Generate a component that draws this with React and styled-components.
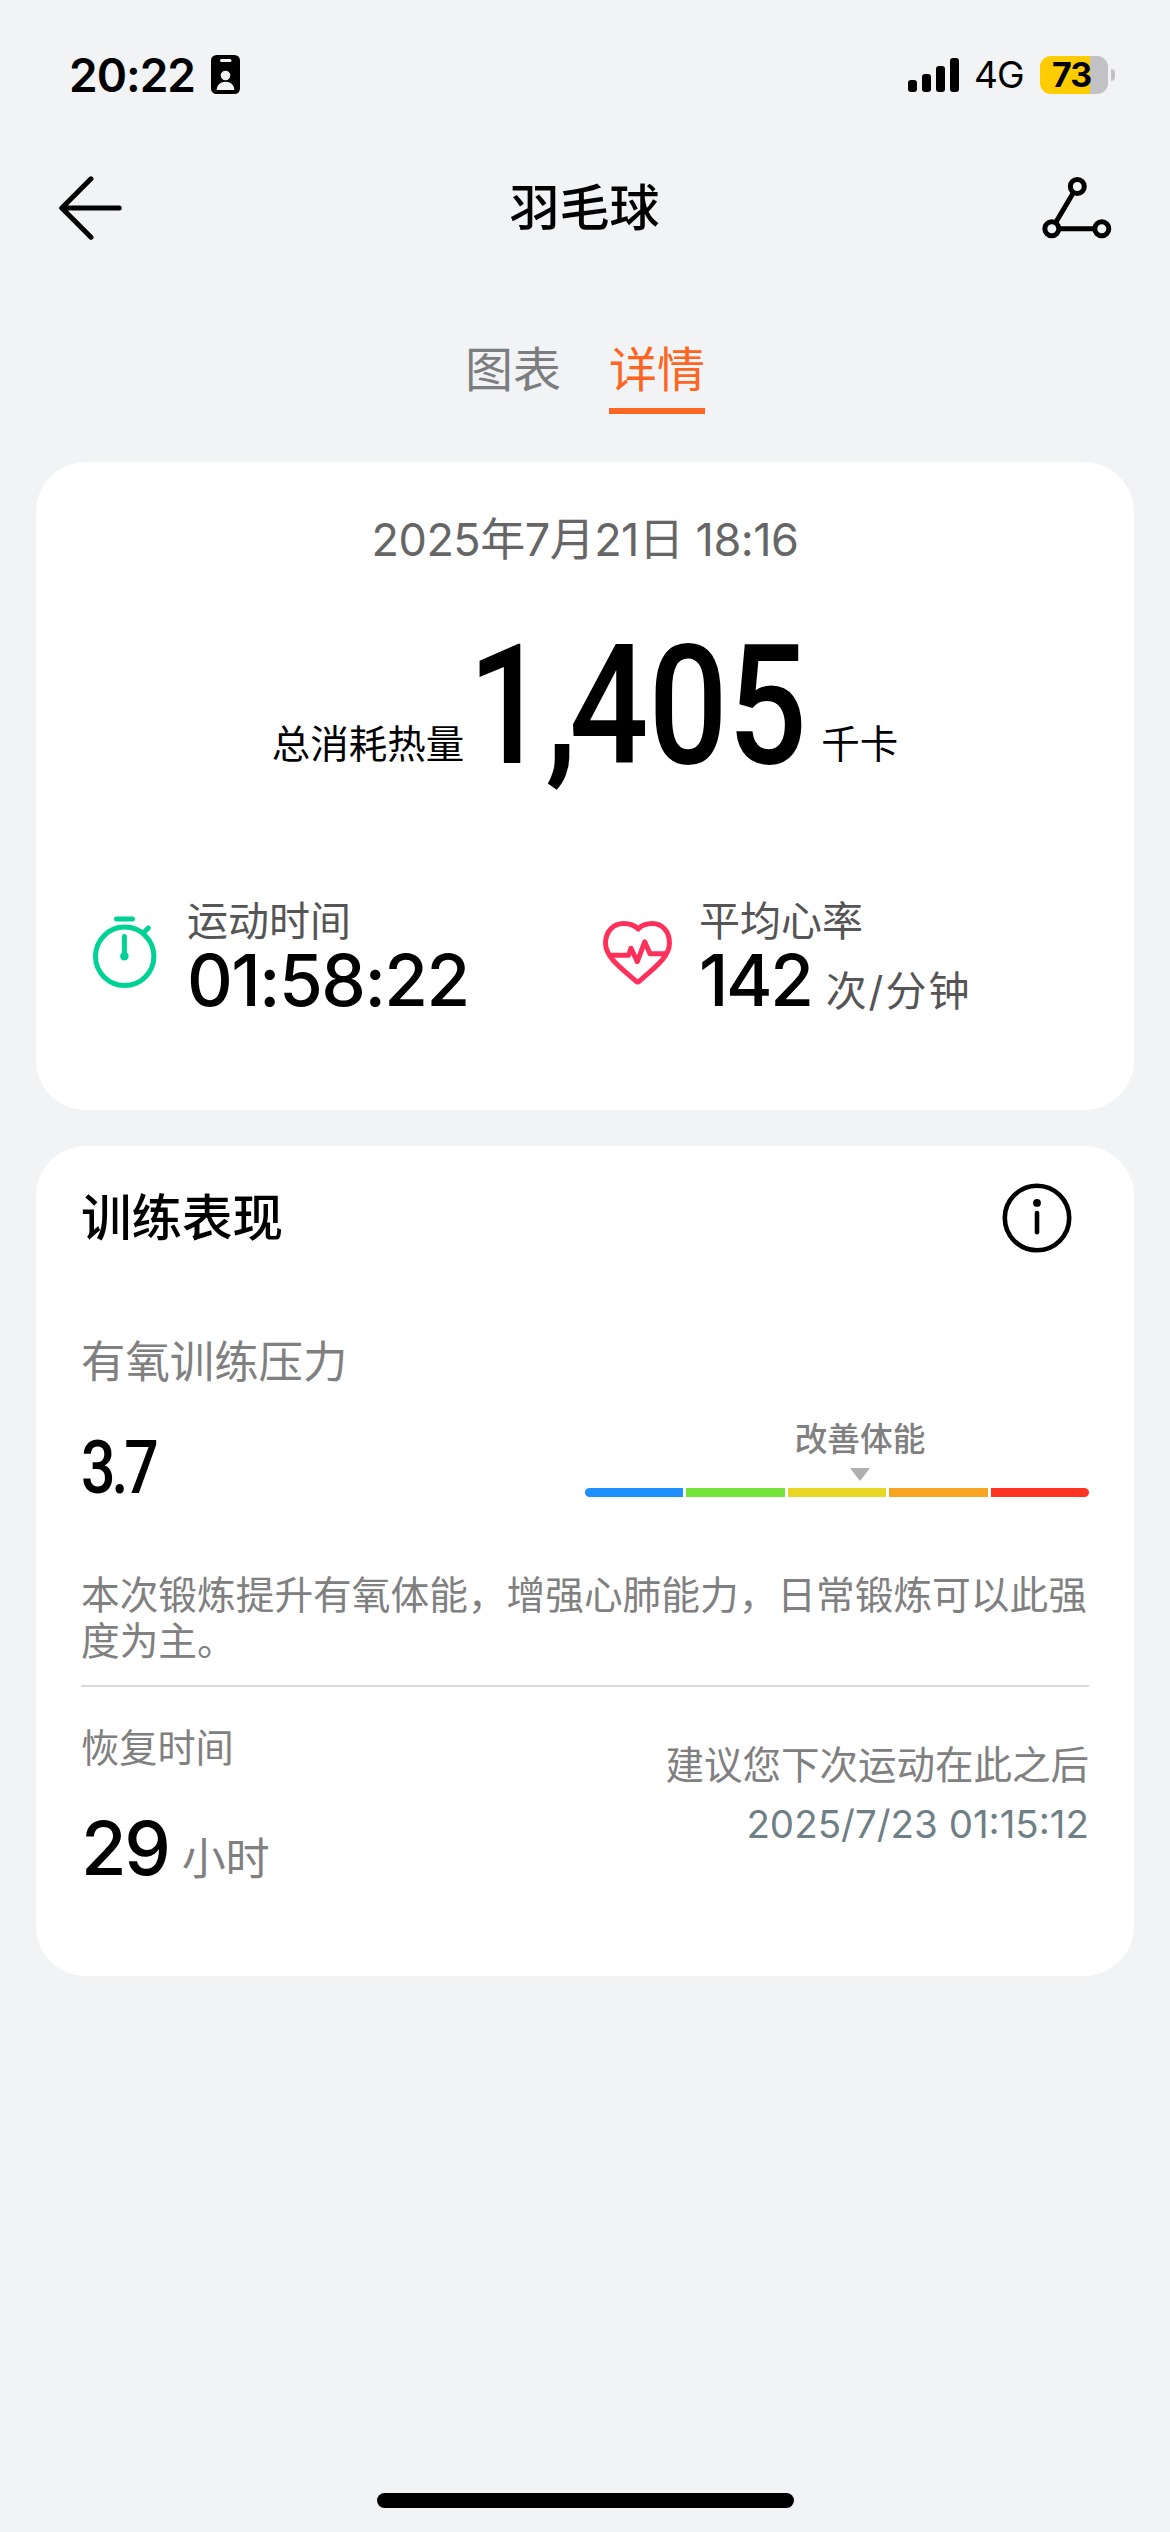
import React, { useState } from "react";
import styled, { createGlobalStyle } from "styled-components";

const zones = ["#1f8fff", "#76e23c", "#e8d624", "#f8a524", "#ff3422"];
const bars = [12, 18, 26, 34];

export default function App() {
  const [tab, setTab] = useState(1);

  return (
    <Screen>
      <GlobalStyle />
      <StatusBar>
        <Clock>20:22</Clock>
        <BadgeIcon />
        <Signal>
          {bars.map((h) => (
            <SignalBar key={h} $h={h} />
          ))}
        </Signal>
        <Network>4G</Network>
        <Battery>
          <BatteryText>73</BatteryText>
        </Battery>
        <BatteryTip />
      </StatusBar>

      <Header>
        <BackIcon />
        <Title>羽毛球</Title>
        <ShareIcon />
      </Header>

      <Tabs>
        {["图表", "详情"].map((name, i) => (
          <Tab key={name} $active={tab === i} onClick={() => setTab(i)}>
            {name}
          </Tab>
        ))}
      </Tabs>

      <Summary>
        <DateText>2025年7月21日 18:16</DateText>
        <Calories>
          <CaloriesLabel>总消耗热量</CaloriesLabel>
          <CaloriesValue>
            <Narrow $scale={0.835}>
              1<Comma>,</Comma>405
            </Narrow>
          </CaloriesValue>
          <CaloriesLabel>千卡</CaloriesLabel>
        </Calories>
        <Stats>
          <Stat>
            <TimerIcon />
            <div>
              <StatLabel>运动时间</StatLabel>
              <StatValue $spacing={-1.6}>01:58:22</StatValue>
            </div>
          </Stat>
          <Stat>
            <HeartIcon />
            <div>
              <StatLabel>平均心率</StatLabel>
              <StatValue $spacing={-2.4}>
                142<StatUnit>次/分钟</StatUnit>
              </StatValue>
            </div>
          </Stat>
        </Stats>
      </Summary>

      <Training>
        <TrainingHead>
          <SectionTitle>训练表现</SectionTitle>
          <InfoIcon />
        </TrainingHead>
        <StressLabel>有氧训练压力</StressLabel>
        <StressRow>
          <StressValue>
            <Narrow $scale={0.81}>3.7</Narrow>
          </StressValue>
          <Gauge>
            <Pointer>
              <PointerText>改善体能</PointerText>
              <PointerArrow />
            </Pointer>
            <Zones>
              {zones.map((c) => (
                <Zone key={c} $color={c} />
              ))}
            </Zones>
          </Gauge>
        </StressRow>
        <Advice>
          本次锻炼提升有氧体能，增强心肺能力，日常锻炼可以此强度为主。
        </Advice>
        <Recovery>
          <div>
            <RecoveryLabel>恢复时间</RecoveryLabel>
            <RecoveryValue>
              29<RecoveryUnit>小时</RecoveryUnit>
            </RecoveryValue>
          </div>
          <NextWorkout>
            <NextLabel>建议您下次运动在此之后</NextLabel>
            <NextDate>2025/7/23 01:15:12</NextDate>
          </NextWorkout>
        </Recovery>
      </Training>

      <HomeBar />
    </Screen>
  );
}

function BadgeIcon() {
  return (
    <svg width="29" height="39" viewBox="0 0 29 39">
      <rect width="29" height="39" rx="5.5" fill="#000" />
      <rect x="9" y="4" width="11.5" height="3" rx="1.5" fill="#f1f3f5" />
      <circle cx="14.5" cy="20.5" r="4.8" fill="#f1f3f5" />
      <path d="M5.7 35c0-5 3.8-8.2 8.8-8.2s8.8 3.2 8.8 8.2z" fill="#f1f3f5" />
    </svg>
  );
}

function BackIcon() {
  return (
    <svg width="64" height="64" viewBox="0 0 64 64" fill="none" stroke="#000" strokeWidth="5" strokeLinecap="round" strokeLinejoin="round">
      <path d="M33 2.8 3.8 32 33 61.2M3.8 32h57.4" />
    </svg>
  );
}

function ShareIcon() {
  return (
    <svg width="70" height="62" viewBox="0 0 70 62" fill="none" stroke="#000" strokeWidth="5">
      <path d="M31.2 16 14.3 44.5M17 51.8h34" />
      <circle cx="35.3" cy="9.5" r="7" />
      <circle cx="9.8" cy="51.8" r="7" />
      <circle cx="59.8" cy="51.8" r="7" />
    </svg>
  );
}

function TimerIcon() {
  return (
    <svg width="70" height="74" viewBox="0 0 70 74" fill="none" stroke="#00d295" strokeWidth="5" strokeLinecap="round">
      <circle cx="32.7" cy="41.3" r="29.2" />
      <path d="M24.5 3.9h16M32.4 21.5v19M53 16.3l3.4-3.4" />
      <circle cx="32.4" cy="41.3" r="4.2" fill="#00d295" stroke="none" />
    </svg>
  );
}

function HeartIcon() {
  return (
    <svg width="71" height="70" viewBox="0 -6 71 70" fill="none" stroke="#ff315b" strokeWidth="5" strokeLinecap="round" strokeLinejoin="round">
      <path d="M35.2 8C31 3.6 26 2.5 20.5 2.5C10.5 2.5 2.5 10.5 2.5 22C2.5 37 20 48.5 33 60.2Q34.7 61.5 36.4 60.2C49 48.5 66.5 37 66.5 22C66.5 10.5 59 2.5 49.5 2.5C44 2.5 39 3.6 35.2 8Z" />
      <path d="M8.5 34.3H25.5L28 27.2L34.3 40.6L41.7 20.8L47 32.8H62.5" />
    </svg>
  );
}

function InfoIcon() {
  return (
    <svg width="70" height="70" viewBox="0 0 70 70" fill="none" stroke="#000" strokeWidth="4.6" strokeLinecap="round">
      <circle cx="35" cy="35" r="32.2" />
      <path d="M35 30v19.3" />
      <circle cx="35" cy="19.9" r="3.9" fill="#000" stroke="none" />
    </svg>
  );
}

const GlobalStyle = createGlobalStyle`
  body {
    margin: 0;
    background-color: #f1f3f5;
  }
`;

const Screen = styled.div`
  display: flex;
  flex-direction: column;
  box-sizing: border-box;
  width: 1170px;
  height: 2532px;
  padding: 0 36px;
  background-color: #f1f3f5;
  color: #000;
  font-family: Inter, "Noto Sans CJK SC", sans-serif;
  white-space: nowrap;
  svg {
    display: block;
    flex-shrink: 0;
  }
`;

const StatusBar = styled.div`
  display: flex;
  align-items: center;
  height: 149px;
  padding: 0 19px 0 33px;
`;

const Clock = styled.div`
  width: 142px;
  font-size: 46px;
  font-weight: 600;
  letter-spacing: -1px;
  line-height: 60px;
`;

const Signal = styled.div`
  display: flex;
  align-items: flex-end;
  gap: 5px;
  height: 34px;
  margin-left: auto;
`;

const SignalBar = styled.div`
  width: 9px;
  height: ${(p) => p.$h}px;
  border-radius: 3px;
  background-color: #000;
`;

const Network = styled.div`
  width: 66px;
  margin-left: 15px;
  font-size: 37px;
  letter-spacing: -1px;
  line-height: 62px;
`;

const Battery = styled.div`
  width: 68px;
  height: 38px;
  border-radius: 11px;
  background: linear-gradient(to right, #ffcc00 50px, #c2c2c4 50px);
`;

const BatteryText = styled.div`
  padding-left: 12px;
  font-size: 34px;
  font-weight: 700;
  letter-spacing: -1px;
  line-height: 38px;
`;

const BatteryTip = styled.div`
  width: 4px;
  height: 12px;
  margin-left: 3px;
  border-radius: 0 6px 6px 0;
  background-color: #c2c2c4;
`;

const Header = styled.div`
  display: flex;
  align-items: center;
  justify-content: space-between;
  height: 117px;
  padding: 0 22px;
`;

const Title = styled.div`
  padding-left: 5px;
  font-size: 50px;
  font-weight: 500;
  line-height: 70px;
`;

const Tabs = styled.div`
  display: flex;
  justify-content: center;
  gap: 48px;
  padding-top: 68px;
`;

const Tab = styled.div`
  padding-bottom: 2px;
  border-bottom: 6px solid ${(p) => (p.$active ? "#fd6522" : "transparent")};
  color: ${(p) => (p.$active ? "#fd6522" : "#7c7d7e")};
  font-size: 48px;
  line-height: 72px;
  cursor: pointer;
`;

const Card = styled.div`
  box-sizing: border-box;
  border-radius: 50px;
  background-color: #fff;
`;

const Summary = styled(Card)`
  height: 648px;
  margin-top: 48px;
  padding-top: 48px;
`;

const DateText = styled.div`
  color: #666;
  font-size: 45px;
  letter-spacing: -0.5px;
  line-height: 60px;
  text-align: center;
`;

const Calories = styled.div`
  display: flex;
  align-items: flex-end;
  justify-content: center;
  height: 210px;
`;

const CaloriesLabel = styled.div`
  font-size: 38.5px;
  line-height: 50px;
  padding-bottom: 11px;
`;

const CaloriesValue = styled.div`
  width: 335px;
  margin: 0 18px 0 4px;
  font-family: Roboto, sans-serif;
  font-size: 167px;
  font-weight: 500;
  line-height: 148px;
`;

// condensed figures used for the headline numbers
const Narrow = styled.span`
  display: inline-block;
  transform: scaleX(${(p) => p.$scale});
  transform-origin: left;
`;

const Comma = styled.span`
  margin: 0 -9px 0 -2px;
`;

const Stats = styled.div`
  display: flex;
  padding: 116px 0 0 56px;
`;

const Stat = styled.div`
  display: flex;
  width: 511px;
  svg {
    margin: 19px 25px 0 0;
  }
`;

const StatLabel = styled.div`
  color: #555;
  font-size: 41px;
  line-height: 50px;
`;

const StatValue = styled.div`
  font-size: 71px;
  font-weight: 500;
  letter-spacing: ${(p) => p.$spacing}px;
  line-height: 68px;
`;

const StatUnit = styled.span`
  margin-left: 14px;
  color: #555;
  font-size: 41px;
  font-weight: 400;
  letter-spacing: 2px;
`;

const Training = styled(Card)`
  height: 830px;
  margin-top: 36px;
  padding: 36px 45px 0;
`;

const TrainingHead = styled.div`
  display: flex;
  align-items: center;
  justify-content: space-between;
  height: 72px;
  padding-right: 17px;
`;

const SectionTitle = styled.div`
  font-size: 50.5px;
  font-weight: 500;
  line-height: 72px;
`;

const StressLabel = styled.div`
  margin-top: 78px;
  color: #808080;
  font-size: 44.4px;
  line-height: 60px;
`;

const StressRow = styled.div`
  display: flex;
  align-items: flex-end;
  justify-content: space-between;
  height: 105px;
`;

const StressValue = styled.div`
  font-family: Roboto, sans-serif;
  font-size: 75px;
  font-weight: 500;
  letter-spacing: -5px;
  line-height: 60px;
`;

const Gauge = styled.div`
  width: 504px;
`;

const Pointer = styled.div`
  display: flex;
  flex-direction: column;
  align-items: center;
  width: 550px;
`;

const PointerText = styled.div`
  color: #808080;
  font-size: 32.7px;
  font-weight: 500;
  line-height: 40px;
`;

const PointerArrow = styled.div`
  margin: 9px 0 7px;
  border: 10.5px solid transparent;
  border-top: 13px solid #b0b0b0;
  border-bottom: 0;
`;

const Zones = styled.div`
  display: flex;
  gap: 3px;
  overflow: hidden;
  border-radius: 5px;
`;

const Zone = styled.div`
  flex: 1;
  height: 9px;
  background-color: ${(p) => p.$color};
`;

const Advice = styled.div`
  margin-top: 75px;
  padding-bottom: 21px;
  border-bottom: 2px solid #d8d8d8;
  color: #808080;
  font-size: 38.7px;
  line-height: 46px;
  white-space: normal;
`;

const Recovery = styled.div`
  display: flex;
  justify-content: space-between;
  padding-top: 36px;
`;

const RecoveryLabel = styled.div`
  color: #808080;
  font-size: 38.2px;
  line-height: 50px;
`;

const RecoveryValue = styled.div`
  margin-top: 35px;
  font-size: 74px;
  font-weight: 500;
  letter-spacing: -2.3px;
  line-height: 80px;
`;

const RecoveryUnit = styled.span`
  margin-left: 13px;
  color: #808080;
  font-size: 44px;
  font-weight: 400;
  letter-spacing: 0;
`;

const NextWorkout = styled.div`
  padding-top: 17px;
  color: #808080;
  font-size: 38.5px;
  text-align: right;
`;

const NextLabel = styled.div`
  line-height: 50px;
`;

const NextDate = styled.div`
  margin-top: 9px;
  color: #6f7f86;
  line-height: 50px;
`;

const HomeBar = styled.div`
  width: 417px;
  height: 15px;
  margin: auto auto 24px;
  border-radius: 8px;
  background-color: #000;
`;
